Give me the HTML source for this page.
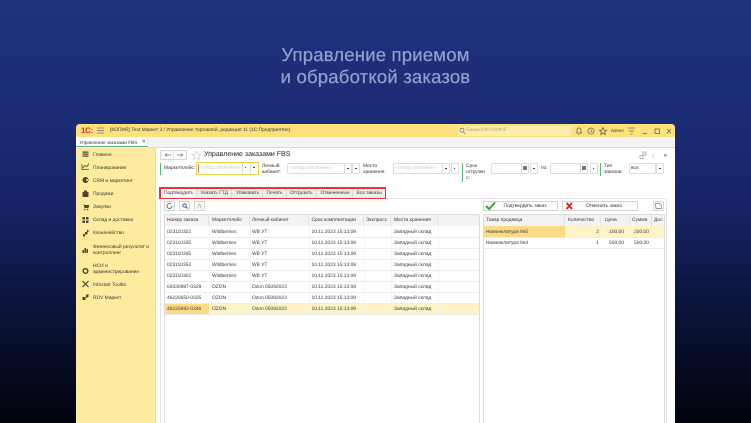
<!DOCTYPE html>
<html><head><meta charset="utf-8">
<style>
html,body{margin:0;padding:0;width:751px;height:423px;overflow:hidden;background:#01030c}
body{position:relative;font-family:"Liberation Sans",sans-serif;text-rendering:geometricPrecision}
div{position:absolute;box-sizing:border-box}
#o{left:0;top:0;width:751px;height:423px;overflow:hidden;background:linear-gradient(180deg,#20327f 0%,#1c2c75 28%,#162364 50%,#0a1238 75%,#01030c 100%)}
#w{left:0;top:0;width:751px;height:440px;filter:blur(.3px)}
.t{white-space:nowrap;font-size:4.9px;color:#3a3a3a;line-height:7px}
.tt{white-space:nowrap;font-size:18.5px;color:#94a1cb;left:0;width:751px;text-align:center;line-height:22px;letter-spacing:.2px;-webkit-text-stroke:.2px #94a1cb}
.f{height:11px;background:#fff;border:1px solid #dcdcdc;border-radius:2px}
.b{width:8px;height:11px;background:#fff;border:1px solid #dcdcdc;border-radius:1px}
.b::after{content:"";position:absolute;left:2px;top:3.500px;width:1.500px;height:1.500px;background:#444}
.g{width:1.300px;background:#56b97b}
.tb{height:9px;top:188.500px;background:#eeeeee;border-right:1px solid #d8d8d8}
.btn{background:#fbfbfb;border:1px solid #d4d4d4;border-radius:1px}
.row{height:1px;background:#ececec}
.hd{background:#f3f3f3;border-right:1px solid #e2e2e2}
.v{top:226px;width:1px;height:88px;background:#f4f4f4}
svg{position:absolute}
</style></head><body>
<div id="o">
<div id="w">
<div class="tt" style="top:44px">Управление приемом</div>
<div class="tt" style="top:66px">и обработкой заказов</div>

<div style="left:76px;top:124px;width:599px;height:312px;background:#fff;border-radius:4px 4px 0 0"></div>
<!-- title bar -->
<div style="left:76px;top:124px;width:599px;height:13px;background:#fbe27c;border-radius:4px 4px 0 0"></div>
<div class="t" style="left:81px;top:126.500px;color:#d9331f;font-weight:bold;font-size:8px;letter-spacing:-.3px">1С:</div>
<svg style="left:97px;top:127px" width="8" height="7"><path d="M0 1h7M0 3.500h7M0 6h7" stroke="#777" stroke-width=".8"/></svg>
<div class="t" style="left:110px;top:126.500px">[КОПИЯ] Test Маркет 3 / Управление торговлей, редакция 11  (1С:Предприятие)</div>
<div style="left:458px;top:125.500px;width:113px;height:10px;background:#fdeda9"></div>
<div class="t" style="left:466px;top:127px;color:#b9a96b">Поиск Ctrl+Shift+F</div>
<svg style="left:459px;top:126.500px" width="7" height="8"><circle cx="3" cy="3.200" r="2" fill="none" stroke="#777" stroke-width=".8"/><path d="M4.500 5l1.700 2" stroke="#777" stroke-width=".8"/></svg>
<svg style="left:574px;top:126px" width="100" height="10" fill="none" stroke="#6a6a50" stroke-width=".8">
<path d="M2 7h6M3 7V4a2 2 0 0 1 4 0v3M5 8v1"/>
<circle cx="17" cy="5" r="3"/><path d="M17 3.500V5l1.300 1"/>
<path d="M29 1.500l1 2.500 2.600.200-2 1.700.700 2.600-2.300-1.400-2.300 1.400.700-2.600-2-1.700 2.600-.200z"/>
<path d="M54 2h7M55 5h5M56.500 8h2"/>
<path d="M69 7.500h4"/>
<rect x="81" y="3" width="4.500" height="4.500"/>
<path d="M93 3l4 4.500M97 3l-4 4.500"/>
</svg>
<div class="t" style="left:611px;top:127px;font-size:4.500px">Admin</div>

<!-- tab row -->
<div style="left:76px;top:137px;width:599px;height:10.500px;background:#f4f4f4;border-bottom:1px solid #d8d8d8"></div>
<div style="left:76px;top:137px;width:72px;height:10.500px;background:#fff;border-right:1px solid #e2e2e2"></div>
<div style="left:76px;top:145.500px;width:72px;height:1.500px;background:#5cb58b"></div>
<div class="t" style="left:79.500px;top:138.500px;font-size:4.700px">Управление заказами FBS</div>
<div class="t" style="left:142px;top:138.500px;color:#333;font-size:6px">×</div>

<!-- sidebar -->
<div style="left:76px;top:147.500px;width:80px;height:290px;background:#fdec9f;border-right:1px solid #f0dc88"></div>
<svg style="left:81px;top:150px" width="10" height="155" fill="#4a4632">
<path d="M1.500 1.500h6v1.200h-6zM1.500 3.500h6v1.200h-6zM1.500 5.500h6v1.200h-6z"/>
<path d="M1 14v5.500h7" fill="none" stroke="#4a4632" stroke-width=".8"/><path d="M2 18l2-2.500 2 1 2-3" fill="none" stroke="#4a4632" stroke-width=".8"/>
<circle cx="4.500" cy="30" r="3"/><circle cx="6" cy="30" r="1" fill="#fdec9f"/>
<path d="M1.500 42h6v5h-6zM3 42v-1.500h3V42"/>
<path d="M1 54h1.500l1 4h4l.800-3H3v1h4"/><circle cx="3.800" cy="59.500" r=".8"/><circle cx="6.700" cy="59.500" r=".8"/>
<path d="M1.500 67h2.500v2.500H1.500zM5 67h2.500v2.500H5zM1.500 70.500h2.500V73H1.500zM5 70.500h2.500V73H5z"/>
<path d="M2 84h2v2.500H2zM4 82h2.500v2.500H4zM6 80h1.500v2H6z"/>
<path d="M1.500 100h1.500v3H1.500zM3.500 98h1.500v5H3.500zM5.500 99h1.500v4H5.500z"/>
<circle cx="4.500" cy="121" r="2.300" fill="none" stroke="#4a4632" stroke-width="1.500"/>
<path d="M1.500 131l6 6M7.500 131l-6 6" stroke="#4a4632" stroke-width="1.200"/>
<path d="M1.500 147h3v3h-3zM5 145l2.500-1v3l-2.500 1z"/>
</svg>
<div class="t" style="left:93px;top:151.500px">Главное</div>
<div class="t" style="left:93px;top:164.500px">Планирование</div>
<div class="t" style="left:93px;top:177.500px">CRM и маркетинг</div>
<div class="t" style="left:93px;top:190.500px">Продажи</div>
<div class="t" style="left:93px;top:203.500px">Закупки</div>
<div class="t" style="left:93px;top:216.500px">Склад и доставка</div>
<div class="t" style="left:93px;top:230px">Казначейство</div>
<div class="t" style="left:93px;top:243.500px">Финансовый результат и</div>
<div class="t" style="left:93px;top:249.500px">контроллинг</div>
<div class="t" style="left:93px;top:262.500px">НСИ и</div>
<div class="t" style="left:93px;top:268.500px">администрирование</div>
<div class="t" style="left:93px;top:281.500px">Infostart Toolkit</div>
<div class="t" style="left:93px;top:294.500px">RDV Маркет</div>

<!-- header -->
<div class="btn" style="left:160px;top:150px;width:27px;height:10px"></div>
<div style="left:173px;top:150px;width:1px;height:10px;background:#e0e0e0"></div>
<svg style="left:163px;top:152px" width="22" height="6" fill="none" stroke="#777" stroke-width=".7"><path d="M2 3h6M2 3l2-1.500M2 3l2 1.500M14 3h6M20 3l-2-1.500M20 3l-2 1.500"/></svg>
<svg style="left:191px;top:150px" width="11" height="11" fill="none" stroke="#cfcfcf" stroke-width=".8"><path d="M5.500 1l1.300 3 3.200.300-2.400 2.100.700 3.100-2.800-1.600-2.800 1.600.700-3.100L1 4.300 4.200 4z"/></svg>
<div class="t" style="left:204px;top:150px;font-size:7px;line-height:10px;color:#222">Управление заказами FBS</div>
<svg style="left:639px;top:151px" width="34" height="9" fill="none" stroke="#999" stroke-width=".7"><rect x="1" y="4.500" width="3" height="3"/><rect x="4" y="1" width="3" height="3"/><path d="M14 2v.8M14 4v.8M14 6v.8" stroke="#777"/><path d="M25 3l2.500 2.500M27.500 3L25 5.500" stroke="#777"/></svg>

<!-- filters -->
<div class="g" style="left:160px;top:163px;height:12px"></div>
<div class="t" style="left:164px;top:165px">Маркетплейс:</div>
<div style="left:195.500px;top:162px;width:63.500px;height:13px;border:1px solid #f8cf4a"></div>
<div class="t" style="left:199px;top:165px;color:#c8c8c8">&lt;отбор отключен&gt;</div>
<div style="left:198px;top:164px;width:.8px;height:9px;background:#999"></div>
<div class="b" style="left:241.500px;top:163px;border-width:0 0 0 1px"></div><div class="b" style="left:250px;top:163px;border-width:0 0 0 1px"></div>
<div class="t" style="left:262px;top:163px">Личный</div><div class="t" style="left:262px;top:169px">кабинет:</div>
<div class="f" style="left:287px;top:163px;width:58px"></div>
<div class="t" style="left:290px;top:165px;color:#c8c8c8">&lt;отбор отключен&gt;</div>
<div class="b" style="left:344px;top:163px"></div><div class="b" style="left:352px;top:163px"></div>
<div class="t" style="left:363px;top:163px">Место</div><div class="t" style="left:363px;top:169px">хранения:</div>
<div class="f" style="left:393px;top:163px;width:50px"></div>
<div class="t" style="left:395px;top:165px;color:#c8c8c8">&lt;отбор отключен&gt;</div>
<div class="b" style="left:442px;top:163px"></div><div class="b" style="left:450.500px;top:163px"></div>
<div class="g" style="left:462px;top:163px;height:19px"></div>
<div class="t" style="left:466px;top:163px">Срок</div><div class="t" style="left:466px;top:169px">отгрузки</div><div class="t" style="left:466px;top:175px">с:</div>
<div class="f" style="left:491px;top:163px;width:31px"></div>
<div class="t" style="left:496px;top:165px;color:#999">. .</div>
<div class="b" style="left:521px;top:163px"></div><div class="b" style="left:530px;top:163px"></div>
<div style="left:523px;top:166px;width:4px;height:4px;background:#777"></div>
<div class="t" style="left:541px;top:165px">по:</div>
<div class="f" style="left:550px;top:163px;width:31px"></div>
<div class="t" style="left:555px;top:165px;color:#999">. .</div>
<div class="b" style="left:580px;top:163px"></div><div class="b" style="left:589.500px;top:163px"></div>
<div style="left:582px;top:166px;width:4px;height:4px;background:#777"></div>
<div class="g" style="left:600px;top:163px;height:13px"></div>
<div class="t" style="left:604px;top:163px">Тип</div><div class="t" style="left:604px;top:169px">заказов:</div>
<div class="f" style="left:629px;top:163px;width:27px"></div>
<div class="t" style="left:631px;top:165px;color:#333">все</div>
<div class="b" style="left:656px;top:163px"></div>

<!-- panel -->
<div style="left:159.500px;top:198px;width:507.500px;height:238px;border:1px solid #e4e4e4;border-bottom:0"></div>

<!-- tabs -->
<div style="left:159px;top:187px;width:227px;height:12px;background:#e8343a"></div>
<div style="left:160.500px;top:188.500px;width:224px;height:9px;background:#eee"></div>
<div class="tb" style="left:160.500px;width:36.500px;background:#fafafa"></div>
<div class="tb" style="left:197px;width:35px"></div>
<div class="tb" style="left:232px;width:31px"></div>
<div class="tb" style="left:263px;width:24px"></div>
<div class="tb" style="left:287px;width:30px"></div>
<div class="tb" style="left:317px;width:36px"></div>
<div class="tb" style="left:353px;width:31.500px;border:0"></div>
<div class="t" style="left:164px;top:189.500px">Подтвердить</div>
<div class="t" style="left:200.500px;top:189.500px">Указать ГТД</div>
<div class="t" style="left:236px;top:189.500px">Упаковать</div>
<div class="t" style="left:266.500px;top:189.500px">Печать</div>
<div class="t" style="left:290px;top:189.500px">Отгрузить</div>
<div class="t" style="left:320.500px;top:189.500px">Отмененные</div>
<div class="t" style="left:356.500px;top:189.500px">Все заказы</div>

<div class="btn" style="left:164px;top:201px;width:11px;height:10px"></div>
<div class="btn" style="left:179px;top:201px;width:11px;height:10px"></div>
<div class="btn" style="left:194px;top:201px;width:11px;height:10px"></div>
<svg style="left:164px;top:201px" width="42" height="10" fill="none"><path d="M8 5a2.500 2.500 0 1 1-1-2" stroke="#3b9c4a" stroke-width="1"/><circle cx="20.500" cy="4.500" r="1.700" stroke="#3a4a9a" stroke-width=".9"/><path d="M22 6l1.500 1.500" stroke="#3a4a9a"/><path d="M35.500 2.500l-2 5M35.500 2.500l2 5" stroke="#aaa" stroke-width=".8"/></svg>

<div class="btn" style="left:483px;top:201px;width:75px;height:10px"></div>
<svg style="left:485px;top:201px" width="12" height="10" fill="none"><path d="M1 5l3 3 6-6.500" stroke="#3fa535" stroke-width="2"/></svg>
<div class="t" style="left:503.500px;top:202.500px">Подтвердить заказ</div>
<div class="btn" style="left:562px;top:201px;width:75.500px;height:10px"></div>
<svg style="left:565px;top:201px" width="10" height="10" fill="none"><path d="M1.500 2l5.500 6M7 2L1.500 8" stroke="#e02020" stroke-width="1.800"/></svg>
<div class="t" style="left:586px;top:202.500px">Отменить заказ</div>
<div class="btn" style="left:652.500px;top:201px;width:11.500px;height:10px"></div>
<svg style="left:654px;top:202px" width="9" height="8" fill="none" stroke="#777" stroke-width=".7"><path d="M1.500 1.500h4l2 2v3h-5.500z"/></svg>

<!-- left table -->
<div style="left:164px;top:214px;width:315.500px;height:222px;border:1px solid #dcdcdc;border-bottom:0"></div>
<div class="hd" style="left:165px;top:215px;width:44px;height:11px"></div>
<div class="hd" style="left:209px;top:215px;width:41px;height:11px"></div>
<div class="hd" style="left:250px;top:215px;width:59px;height:11px"></div>
<div class="hd" style="left:309px;top:215px;width:55px;height:11px"></div>
<div class="hd" style="left:364px;top:215px;width:27px;height:11px"></div>
<div class="hd" style="left:391px;top:215px;width:47px;height:11px"></div>
<div class="hd" style="left:438px;top:215px;width:41px;height:11px;border:0"></div>
<div class="t" style="left:167px;top:217px">Номер заказа</div>
<div class="t" style="left:212px;top:217px">Маркетплейс</div>
<div class="t" style="left:252px;top:217px">Личный кабинет</div>
<div class="t" style="left:311.500px;top:217px">Срок комплектации</div>
<div class="t" style="left:366px;top:217px">Экспресс</div>
<div class="t" style="left:394px;top:217px">Места хранения</div>

<div style="left:165px;top:303px;width:314px;height:11px;background:#fef3c6"></div>
<div style="left:165px;top:303px;width:44px;height:11px;background:#fbdb84"></div>
<div class="row" style="left:165px;top:237px;width:314px"></div>
<div class="row" style="left:165px;top:248px;width:314px"></div>
<div class="row" style="left:165px;top:259px;width:314px"></div>
<div class="row" style="left:165px;top:270px;width:314px"></div>
<div class="row" style="left:165px;top:281px;width:314px"></div>
<div class="row" style="left:165px;top:292px;width:314px"></div>
<div class="row" style="left:165px;top:303px;width:314px"></div>
<div class="row" style="left:165px;top:314px;width:314px"></div>
<div class="v" style="left:209px"></div>
<div class="v" style="left:250px"></div>
<div class="v" style="left:309px"></div>
<div class="v" style="left:364px"></div>
<div class="v" style="left:391px"></div>
<div class="v" style="left:438px"></div>

<div class="t" style="left:167px;top:228.500px">023110322</div><div class="t" style="left:212px;top:228.500px">Wildberries</div><div class="t" style="left:252px;top:228.500px">WB УТ</div><div class="t" style="left:311.500px;top:228.500px">10.11.2023 15:13:09</div><div class="t" style="left:394px;top:228.500px">Западный склад</div>
<div class="t" style="left:167px;top:239.500px">023110335</div><div class="t" style="left:212px;top:239.500px">Wildberries</div><div class="t" style="left:252px;top:239.500px">WB УТ</div><div class="t" style="left:311.500px;top:239.500px">10.11.2023 15:13:09</div><div class="t" style="left:394px;top:239.500px">Западный склад</div>
<div class="t" style="left:167px;top:250.500px">023110345</div><div class="t" style="left:212px;top:250.500px">Wildberries</div><div class="t" style="left:252px;top:250.500px">WB УТ</div><div class="t" style="left:311.500px;top:250.500px">10.11.2023 15:13:09</div><div class="t" style="left:394px;top:250.500px">Западный склад</div>
<div class="t" style="left:167px;top:261.500px">023110352</div><div class="t" style="left:212px;top:261.500px">Wildberries</div><div class="t" style="left:252px;top:261.500px">WB УТ</div><div class="t" style="left:311.500px;top:261.500px">10.11.2023 15:13:09</div><div class="t" style="left:394px;top:261.500px">Западный склад</div>
<div class="t" style="left:167px;top:272.500px">023110302</div><div class="t" style="left:212px;top:272.500px">Wildberries</div><div class="t" style="left:252px;top:272.500px">WB УТ</div><div class="t" style="left:311.500px;top:272.500px">10.11.2023 15:13:09</div><div class="t" style="left:394px;top:272.500px">Западный склад</div>
<div class="t" style="left:167px;top:283.500px">69330987-0329</div><div class="t" style="left:212px;top:283.500px">OZON</div><div class="t" style="left:252px;top:283.500px">Ozon 05092023</div><div class="t" style="left:311.500px;top:283.500px">10.11.2023 15:13:09</div><div class="t" style="left:394px;top:283.500px">Западный склад</div>
<div class="t" style="left:167px;top:294.500px">46220650-0325</div><div class="t" style="left:212px;top:294.500px">OZON</div><div class="t" style="left:252px;top:294.500px">Ozon 05092023</div><div class="t" style="left:311.500px;top:294.500px">10.11.2023 15:13:09</div><div class="t" style="left:394px;top:294.500px">Западный склад</div>
<div class="t" style="left:167px;top:305.500px">46220692-0346</div><div class="t" style="left:212px;top:305.500px">OZON</div><div class="t" style="left:252px;top:305.500px">Ozon 05092023</div><div class="t" style="left:311.500px;top:305.500px">10.11.2023 15:13:09</div><div class="t" style="left:394px;top:305.500px">Западный склад</div>

<!-- right table -->
<div style="left:483px;top:214px;width:181.500px;height:222px;border:1px solid #dcdcdc;border-bottom:0"></div>
<div class="hd" style="left:484px;top:215px;width:81px;height:11px"></div>
<div class="hd" style="left:565px;top:215px;width:36px;height:11px"></div>
<div class="hd" style="left:601px;top:215px;width:29px;height:11px"></div>
<div class="hd" style="left:630px;top:215px;width:22px;height:11px"></div>
<div class="hd" style="left:652px;top:215px;width:12px;height:11px;border:0"></div>
<div class="t" style="left:486px;top:217px">Товар продавца</div>
<div class="t" style="left:568px;top:217px">Количество</div>
<div class="t" style="left:605px;top:217px">Цена</div>
<div class="t" style="left:632px;top:217px">Сумма</div>
<div class="t" style="left:654px;top:217px;width:9px;overflow:hidden">Дос</div>
<div style="left:484px;top:226px;width:180px;height:11px;background:#fef3c6"></div>
<div style="left:484px;top:226px;width:81px;height:11px;background:#fbdb84"></div>
<div class="row" style="left:484px;top:237px;width:180px"></div>
<div class="row" style="left:484px;top:248px;width:180px"></div>
<div class="t" style="left:486px;top:228.500px">Номенклатура №5</div>
<div class="t" style="left:565px;top:228.500px;width:34px;text-align:right">2</div>
<div class="t" style="left:601px;top:228.500px;width:23px;text-align:right">100,00</div>
<div class="t" style="left:625px;top:228.500px;width:24px;text-align:right">200,00</div>
<div class="t" style="left:486px;top:239.500px">Номенклатура №4</div>
<div class="t" style="left:565px;top:239.500px;width:34px;text-align:right">1</div>
<div class="t" style="left:601px;top:239.500px;width:23px;text-align:right">500,00</div>
<div class="t" style="left:625px;top:239.500px;width:24px;text-align:right">500,00</div>
</div>
</div>
</body></html>
